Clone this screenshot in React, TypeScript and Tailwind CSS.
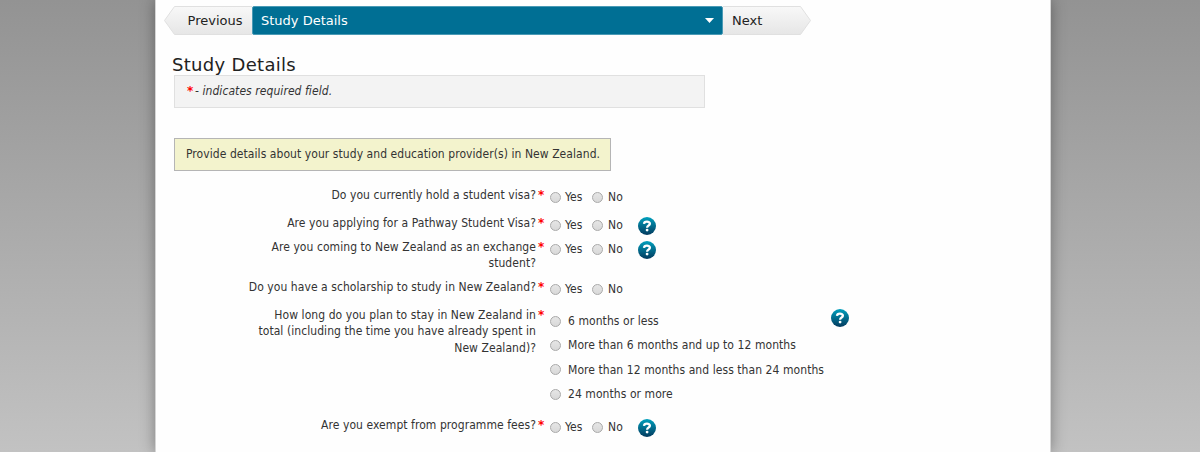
import clsx from "clsx";

type Question = {
  lines: string[];
  height: string;
  help?: boolean;
  options?: string[];
};

const questions: Question[] = [
  {
    lines: ["Do you currently hold a student visa?"],
    height: "h-[28px]",
  },
  {
    lines: ["Are you applying for a Pathway Student Visa?"],
    height: "h-[24px]",
    help: true,
  },
  {
    lines: ["Are you coming to New Zealand as an exchange", "student?"],
    height: "h-[40px]",
    help: true,
  },
  {
    lines: ["Do you have a scholarship to study in New Zealand?"],
    height: "h-[28px]",
  },
  {
    lines: [
      "How long do you plan to stay in New Zealand in",
      "total (including the time you have already spent in",
      "New Zealand)?",
    ],
    height: "h-[110px]",
    help: true,
    options: [
      "6 months or less",
      "More than 6 months and up to 12 months",
      "More than 12 months and less than 24 months",
      "24 months or more",
    ],
  },
  {
    lines: ["Are you exempt from programme fees?"],
    height: "h-[28px]",
    help: true,
  },
];

const Radio = () => (
  <span className="block size-[11px] shrink-0 rounded-full border border-[#a9a9a9] bg-linear-to-b from-[#e6e6e6] to-[#d8d8d8]" />
);

const HelpIcon = () => (
  <svg className="block size-[18px] shrink-0" viewBox="0 0 18 18">
    <defs>
      <linearGradient id="help" x1="0" y1="0" x2="0" y2="1">
        <stop offset="0" stopColor="#00a0bd" />
        <stop offset="1" stopColor="#033a5e" />
      </linearGradient>
    </defs>
    <circle cx="9" cy="9" r="9" fill="url(#help)" />
    <path
      d="M6 6.9C6.1 3.9 11.9 3.9 11.9 6.8C11.9 8.7 9.1 8.4 9.1 10.7"
      fill="none"
      stroke="#fff"
      strokeWidth="2.3"
    />
    <circle cx="9.1" cy="13.1" r="1.4" fill="#fff" />
  </svg>
);

const YesNo = () => (
  <div className="flex h-[11px] items-center">
    <Radio />
    <span className="ml-1 w-[27px]">Yes</span>
    <Radio />
    <span className="ml-[5px]">No</span>
  </div>
);

const QuestionRow = ({ question }: { question: Question }) => (
  <div className={clsx("flex", question.height)}>
    <div className="w-[380px] text-right">
      {question.lines.map((line) => (
        <div key={line} className="whitespace-nowrap">
          {line}
        </div>
      ))}
    </div>
    <span className="ml-[2px] w-[12px] font-['DejaVu_Sans',sans-serif] text-[12px] font-bold text-[#f00]">
      *
    </span>
    {question.options ? (
      <div className="flex w-[281px] flex-col gap-[13.4px] pt-[8.5px]">
        {question.options.map((option) => (
          <div key={option} className="flex h-[11px] items-center">
            <Radio />
            <span className="ml-[7px] whitespace-nowrap">{option}</span>
          </div>
        ))}
      </div>
    ) : (
      <div className="w-[88px] pt-[5px]">
        <YesNo />
      </div>
    )}
    {question.help && (
      <div className="pt-[2px]">
        <HelpIcon />
      </div>
    )}
  </div>
);

const StepNav = () => (
  <nav className="ml-[8px] flex h-[29px] font-['DejaVu_Sans',Verdana,sans-serif] text-[13px] tracking-normal text-[#222]">
    <button className="relative h-[29px] w-[88px]">
      <svg className="absolute inset-0" width="88" height="29">
        <defs>
          <linearGradient id="step" x1="0" y1="0" x2="0" y2="1">
            <stop offset="0" stopColor="#f8f8f8" />
            <stop offset="1" stopColor="#e6e6e6" />
          </linearGradient>
        </defs>
        <path
          d="M88 .5H10.5L.5 14.5L10.5 28.5H88"
          fill="url(#step)"
          stroke="#e0e0e0"
        />
      </svg>
      <span className="relative top-px ml-[14px]">Previous</span>
    </button>
    <button className="flex w-[471px] items-center justify-between rounded-[2px] border border-[#4a9ab5] bg-[#006f94] pr-[8px] pl-2 text-white">
      <span className="pt-px">Study Details</span>
      <svg width="9" height="5">
        <path d="M0 0H9L4.5 5Z" fill="#fff" />
      </svg>
    </button>
    <button className="relative h-[29px] w-[88px] text-left">
      <svg className="absolute inset-0" width="88" height="29">
        <path
          d="M0 .5H77.5L87.5 14.5L77.5 28.5H0"
          fill="url(#step)"
          stroke="#e0e0e0"
        />
      </svg>
      <span className="relative top-px ml-[9px]">Next</span>
    </button>
  </nav>
);

const App = () => {
  return (
    <div className="h-[452px] overflow-hidden bg-linear-to-b from-[#939393] to-[#c2c2c2] font-['DejaVu_Sans_Condensed','DejaVu_Sans',Verdana,sans-serif] text-[12px] leading-[16.3px] tracking-[0.065px] text-[#333]">
      <main className="ml-[155px] h-[452px] w-[896px] border-x border-[#d5d5d5] bg-[#fefefe] pt-[6px] shadow-[0_0_14px_rgba(0,0,0,0.35)]">
        <StepNav />
        <h1 className="mt-[19px] ml-[16px] h-[21px] font-['DejaVu_Sans',Verdana,sans-serif] text-[18px] leading-[22px] tracking-[0.3px] text-[#222]">
          Study Details
        </h1>
        <div className="ml-[18px] flex h-[33px] w-[531px] items-center border border-[#e0e0e0] bg-[#f3f3f3] pl-3 italic">
          <span className="w-[8px] font-['DejaVu_Sans',sans-serif] text-[12px] font-bold text-[#f00] not-italic">
            *
          </span>
          <span>- indicates required field.</span>
        </div>
        <div className="mt-[30px] ml-[18px] flex h-[33px] w-[437px] items-center border border-[#b5b5b5] bg-[#f3f3cd] pl-[11px] whitespace-nowrap">
          Provide details about your study and education provider(s) in New
          Zealand.
        </div>
        <form className="mt-[16px]">
          {questions.map((question) => (
            <QuestionRow key={question.lines[0]} question={question} />
          ))}
        </form>
      </main>
    </div>
  );
};

export default App;
